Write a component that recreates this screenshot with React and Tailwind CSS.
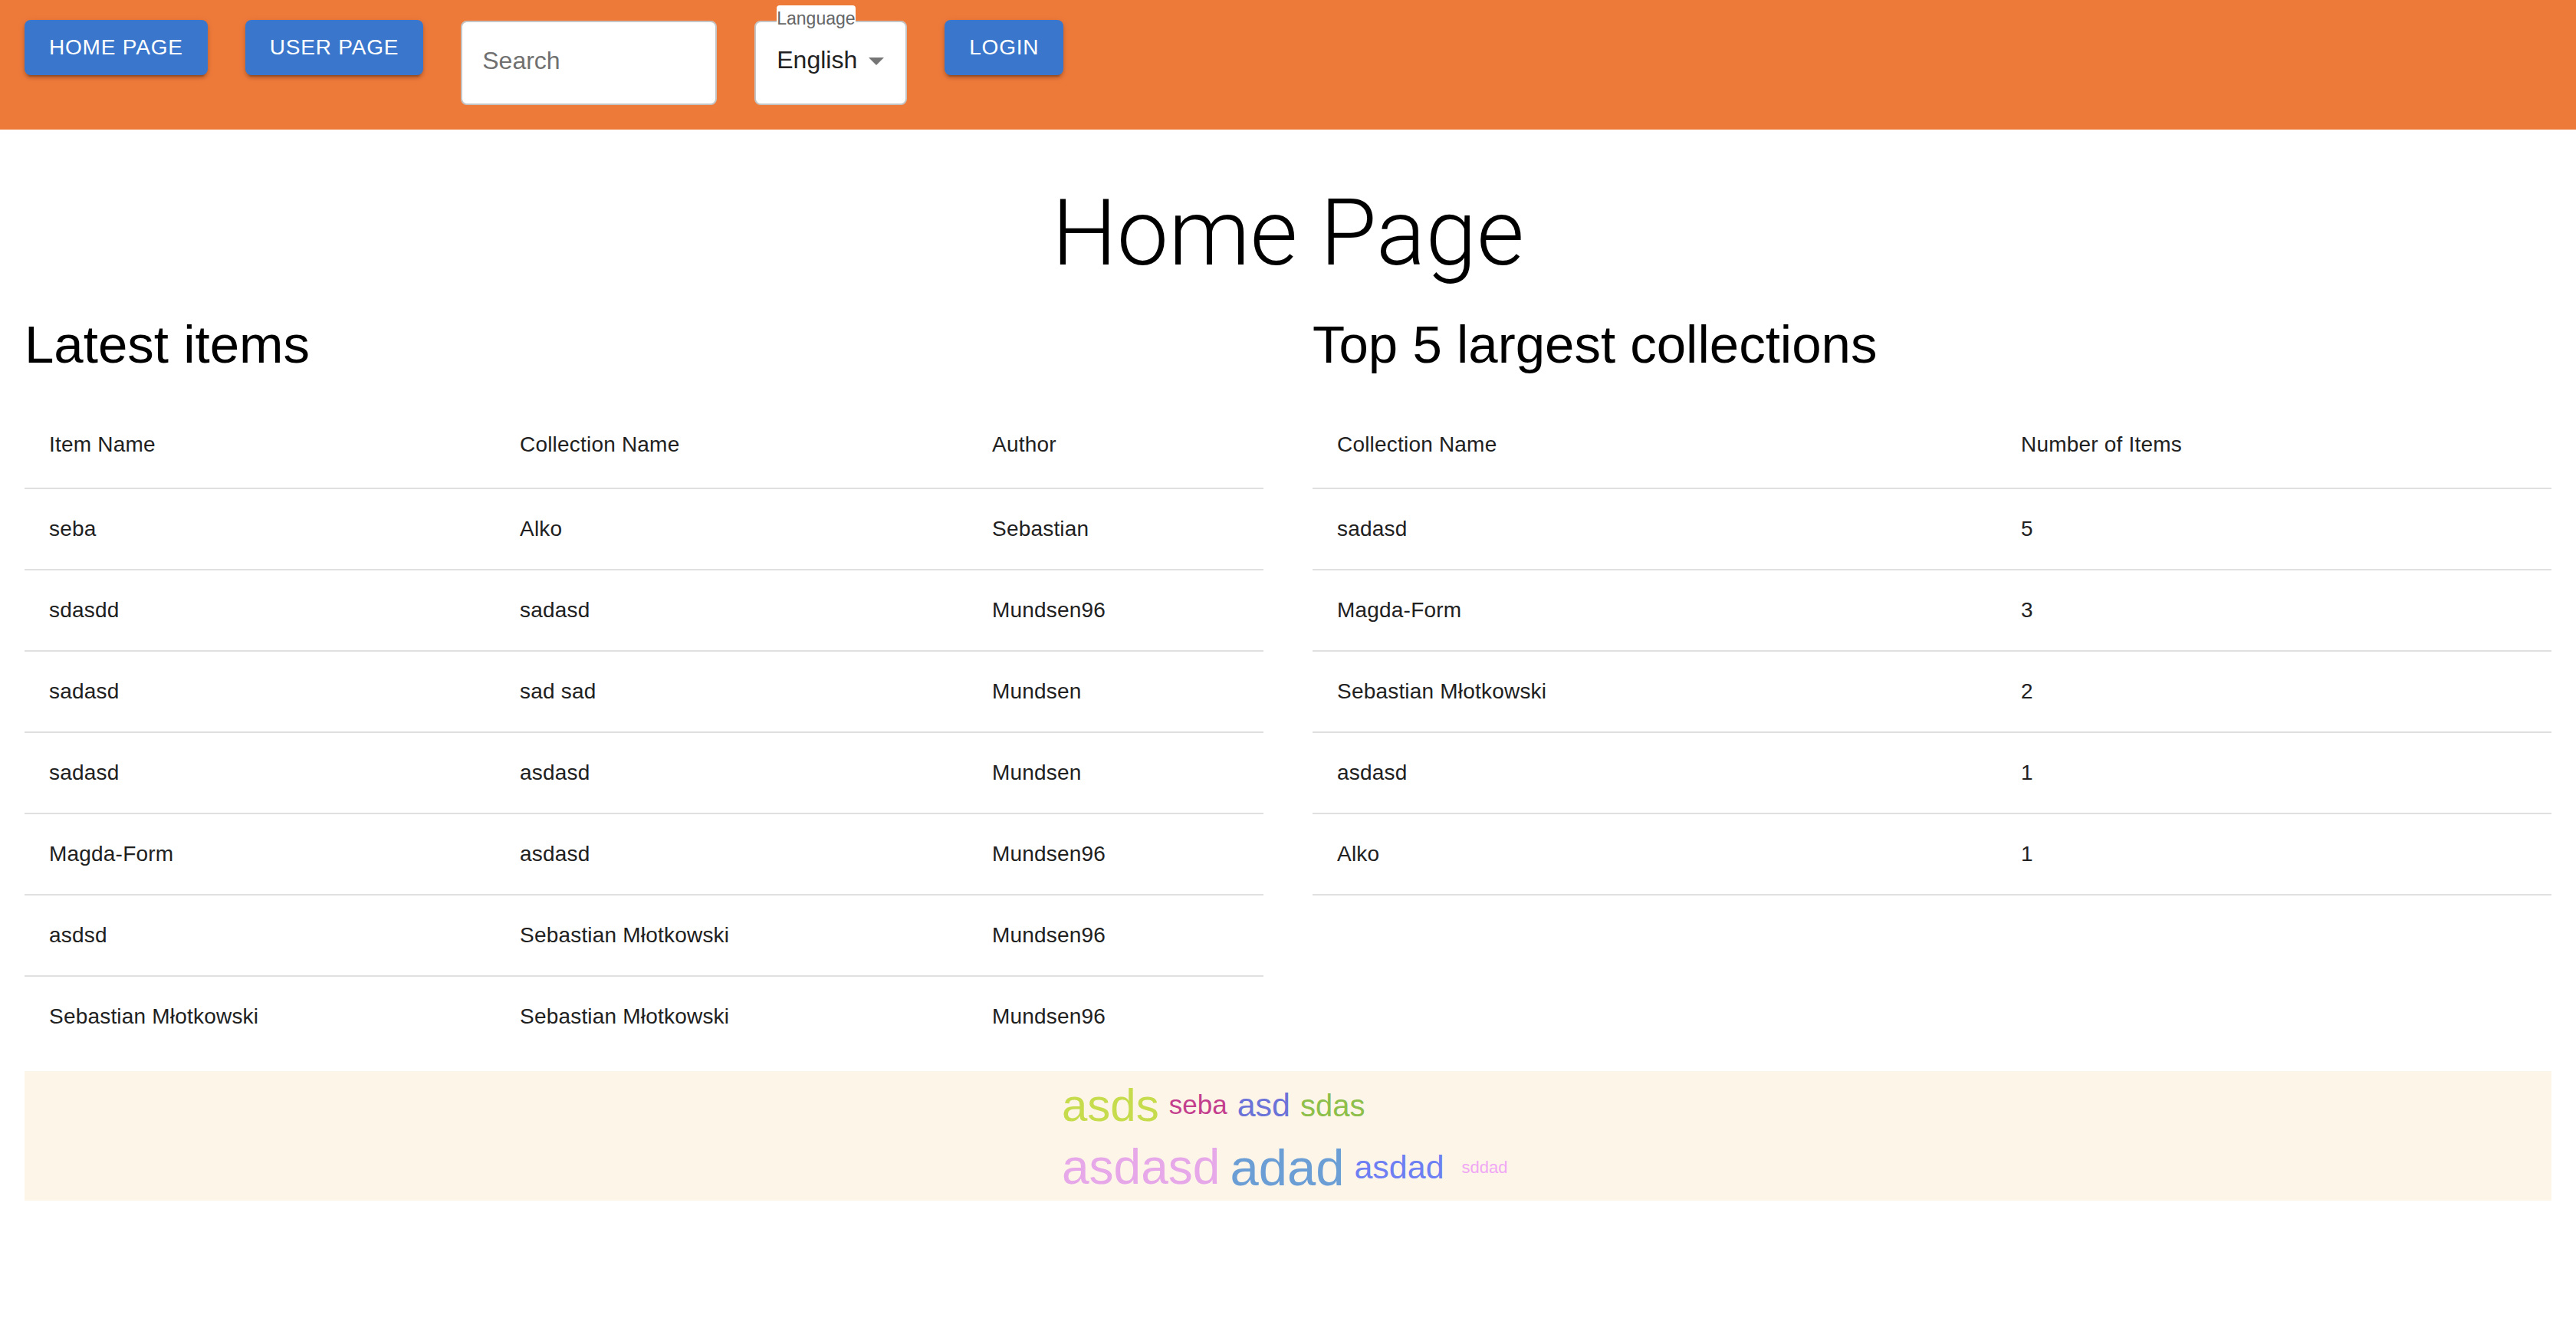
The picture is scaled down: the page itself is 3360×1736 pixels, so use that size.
import { useState } from 'react';

const latestItems = [
  ['seba', 'Alko', 'Sebastian'],
  ['sdasdd', 'sadasd', 'Mundsen96'],
  ['sadasd', 'sad sad', 'Mundsen'],
  ['sadasd', 'asdasd', 'Mundsen'],
  ['Magda-Form', 'asdasd', 'Mundsen96'],
  ['asdsd', 'Sebastian Młotkowski', 'Mundsen96'],
  ['Sebastian Młotkowski', 'Sebastian Młotkowski', 'Mundsen96'],
];

const topCollections = [
  ['sadasd', 5],
  ['Magda-Form', 3],
  ['Sebastian Młotkowski', 2],
  ['asdasd', 1],
  ['Alko', 1],
];

const cloudRows = [
  [
    { word: 'asds', cls: 'text-[60px] text-[#c6dc4d]' },
    { word: 'seba', cls: 'text-[35px] text-[#c43e8e]' },
    { word: 'asd', cls: 'text-[43px] text-[#6b73d8]' },
    { word: 'sdas', cls: 'text-[40px] text-[#8dbf4a]' },
  ],
  [
    { word: 'asdasd', cls: 'text-[64px] text-[#e6a8e8]' },
    { word: 'adad', cls: 'text-[67px] text-[#6c9ed6]' },
    { word: 'asdad', cls: 'text-[43px] text-[#6d7ff2]' },
    { word: 'sddad', cls: 'ml-[10px] text-[22px] text-[#f0a8f4]' },
  ],
];

const btnClass =
  'h-[72px] rounded-[8px] bg-[#3a77cc] px-8 text-[28px] uppercase tracking-[0.8px] text-white shadow-[0_6px_2px_-4px_rgba(0,0,0,0.2),0_4px_4px_0_rgba(0,0,0,0.14),0_2px_10px_0_rgba(0,0,0,0.12)]';

function NavBar() {
  const [query, setQuery] = useState('');
  return (
    <header className="flex h-[169px] items-start gap-[49px] bg-[#ee7a3a] pl-8 pt-[26px]">
      <button type="button" className={btnClass}>Home Page</button>
      <button type="button" className={btnClass}>User Page</button>
      <input
        value={query}
        onChange={(e) => setQuery(e.target.value)}
        placeholder="Search"
        className="mt-[1px] h-[110px] w-[334px] rounded-[8px] border-2 border-[#c4c4c4] bg-white px-[26px] pb-[6px] text-[32px] text-[#222] outline-none placeholder:text-[#707070]"
      />
      <div className="relative mt-[1px] flex h-[110px] w-[199px] items-start rounded-[8px] border-2 border-[#c4c4c4] bg-white pl-[27px] pr-[14px] pt-[26px]">
        <span className="absolute -top-[22px] left-[27px] rounded-t-[4px] bg-white pt-[4px] text-[23px] leading-[26px] text-[#666]">
          Language
        </span>
        <span className="text-[32px] leading-[46px] text-[#222]">English</span>
        <svg viewBox="0 0 24 24" className="ml-auto h-[48px] w-[48px] fill-[#757575]">
          <path d="M7 10l5 5 5-5z" />
        </svg>
      </div>
      <button type="button" className={btnClass}>Login</button>
    </header>
  );
}

function DataTable({ heads, widths, rows, lastBorder }) {
  return (
    <table className="mt-8 w-full border-collapse text-left text-[28px] tracking-[0.2px] text-[#212121]">
      <thead>
        <tr>
          {heads.map((h, i) => (
            <th key={h} className={`${widths[i]} border-b-2 border-[#e0e0e0] px-8 py-8 font-normal leading-[48px]`}>
              {h}
            </th>
          ))}
        </tr>
      </thead>
      <tbody>
        {rows.map((row, r) => {
          const border = lastBorder || r < rows.length - 1 ? 'border-b-2 border-[#e0e0e0]' : '';
          return (
            <tr key={r}>
              {row.map((cell, c) => (
                <td key={c} className={`${border} px-8 py-8 leading-[40px]`}>
                  {cell}
                </td>
              ))}
            </tr>
          );
        })}
      </tbody>
    </table>
  );
}

function TagCloud() {
  return (
    <div className="mt-[19px] h-[169px] bg-[#fef5e9] pt-[10px]">
      <div className="mx-auto flex w-[590px] flex-col gap-y-[8px]">
        {cloudRows.map((row, i) => (
          <div key={i} className="flex items-center gap-x-[13px]">
            {row.map((t) => (
              <span key={t.word} className={`${t.cls} leading-[1.15]`}>
                {t.word}
              </span>
            ))}
          </div>
        ))}
      </div>
    </div>
  );
}

export default function App() {
  return (
    <div className="min-h-screen bg-white font-['Liberation_Sans',Arial,sans-serif] text-black">
      <NavBar />
      <main className="px-8">
        <h1 className="mt-[63px] text-center font-['Roboto',sans-serif] text-[120px] font-light leading-[144px]">
          Home Page
        </h1>
        <div className="mt-8 grid grid-cols-2 gap-16">
          <section>
            <h2 className="text-[69px] leading-[84px]">Latest items</h2>
            <DataTable
              heads={['Item Name', 'Collection Name', 'Author']}
              widths={['w-[614px]', 'w-[616px]', '']}
              rows={latestItems}
              lastBorder={false}
            />
          </section>
          <section>
            <h2 className="text-[69px] leading-[84px]">Top 5 largest collections</h2>
            <DataTable
              heads={['Collection Name', 'Number of Items']}
              widths={['w-[892px]', '']}
              rows={topCollections}
              lastBorder
            />
          </section>
        </div>
        <TagCloud />
      </main>
    </div>
  );
}
